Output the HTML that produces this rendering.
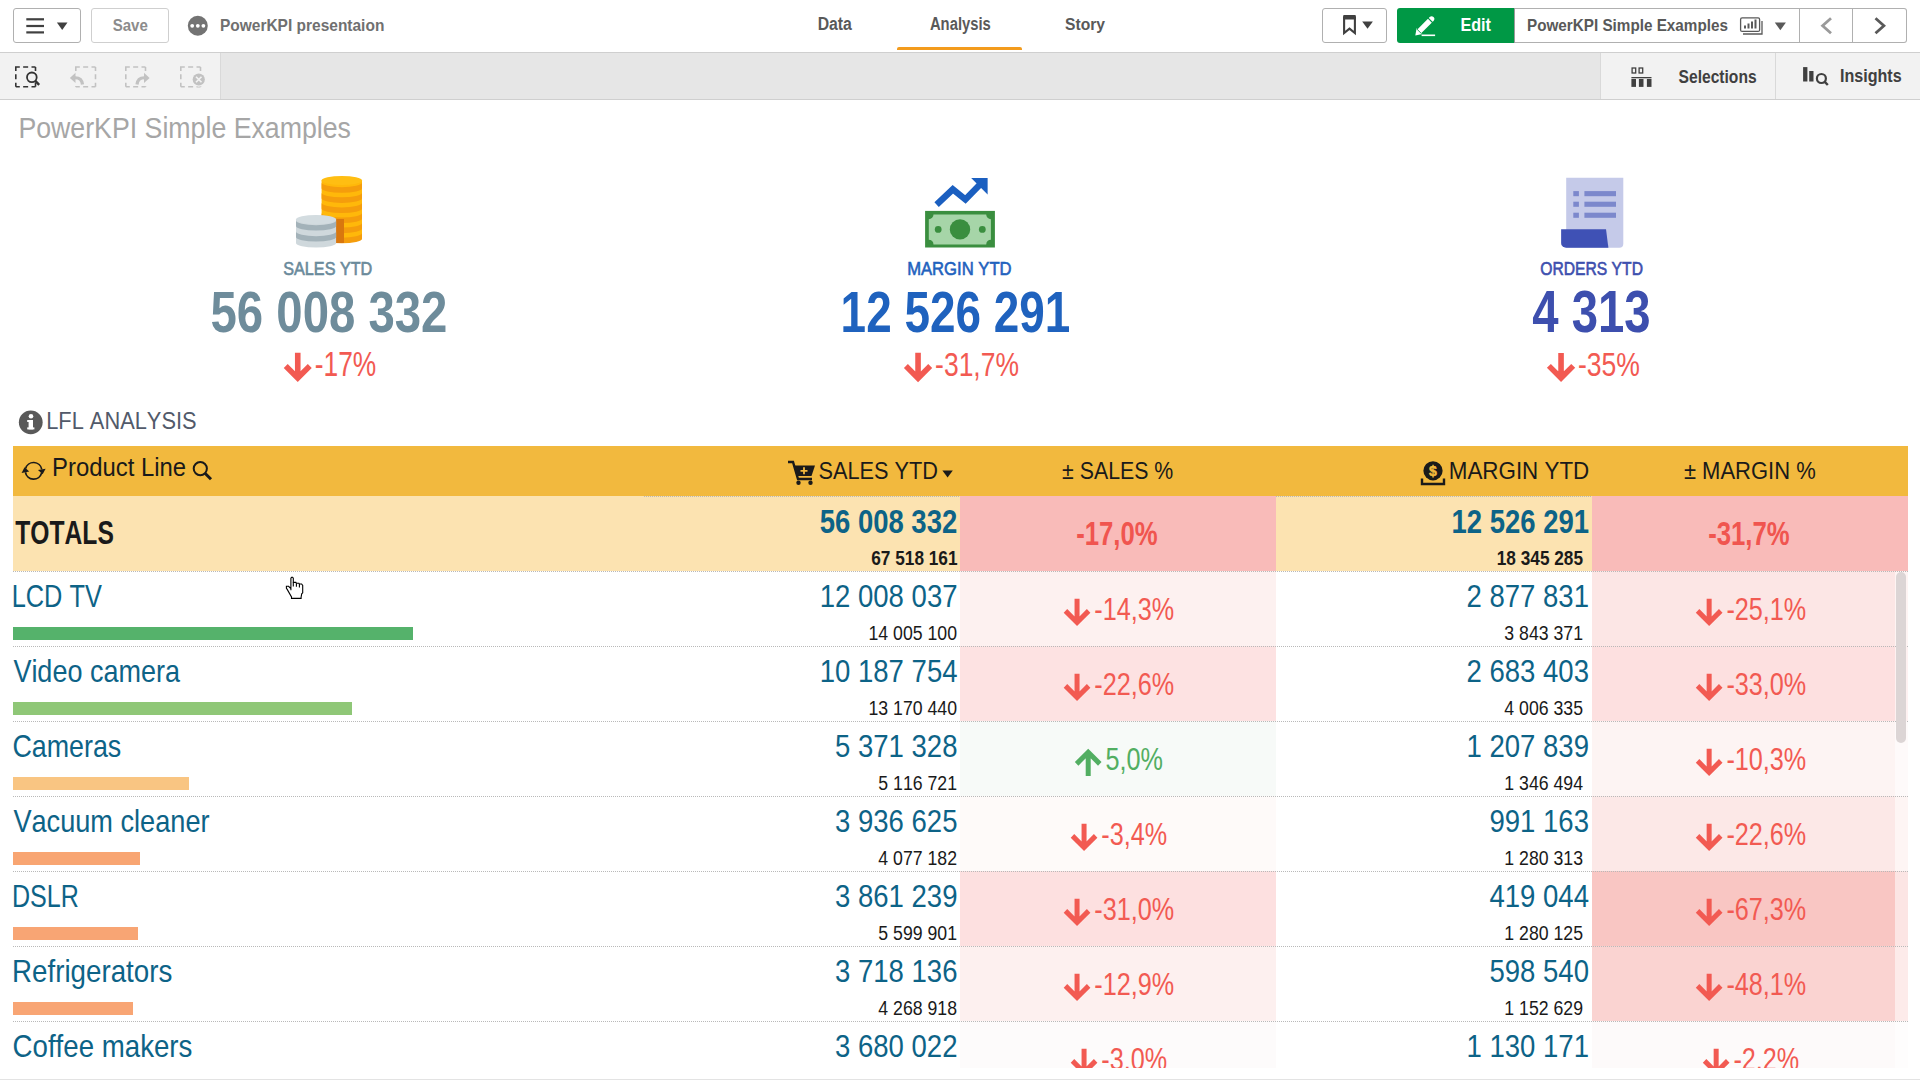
<!DOCTYPE html>
<html><head><meta charset="utf-8"><style>
html,body{margin:0;padding:0;background:#fff;width:1920px;height:1080px;overflow:hidden;}
body{position:relative;font-family:"Liberation Sans",sans-serif;}
svg text{font-family:"Liberation Sans",sans-serif;font-kerning:none;}
</style></head><body>
<div style="position:absolute;left:0px;top:0px;width:1920px;height:52px;background:#ffffff;"></div><div style="position:absolute;left:0px;top:52px;width:1920px;height:1px;background:#cfcfcf;"></div><div style="position:absolute;left:0px;top:53px;width:1920px;height:46px;background:#e6e6e6;"></div><div style="position:absolute;left:0px;top:53px;width:220px;height:46px;background:#f2f2f2;"></div><div style="position:absolute;left:220px;top:53px;width:1px;height:46px;background:#d9d9d9;"></div><div style="position:absolute;left:1600px;top:53px;width:320px;height:46px;background:#f2f2f2;"></div><div style="position:absolute;left:1600px;top:53px;width:1px;height:46px;background:#d9d9d9;"></div><div style="position:absolute;left:1775px;top:53px;width:1px;height:46px;background:#d9d9d9;"></div><div style="position:absolute;left:0px;top:99px;width:1920px;height:1px;background:#cfcfcf;"></div><div style="position:absolute;left:13px;top:8px;width:66px;height:33px;border:1px solid #b0b0b0;border-radius:3px;"></div><div style="position:absolute;left:91px;top:8px;width:76px;height:33px;border:1px solid #cfcfcf;border-radius:3px;"></div><div style="position:absolute;left:1322px;top:8px;width:63px;height:33px;border:1px solid #b0b0b0;border-radius:3px;"></div><div style="position:absolute;left:1397px;top:8px;width:116.5px;height:35px;background:#009845;border-radius:3px 0 0 3px;"></div><div style="position:absolute;left:1514px;top:8px;width:391.5px;height:33px;border:1px solid #b0b0b0;border-left:none;border-radius:0 3px 3px 0;"></div><div style="position:absolute;left:1799px;top:8px;width:1px;height:35px;background:#b0b0b0;"></div><div style="position:absolute;left:1513.5px;top:8px;width:1.0px;height:35px;background:#9a9a9a;"></div><div style="position:absolute;left:1852px;top:8px;width:1px;height:35px;background:#b0b0b0;"></div><div style="position:absolute;left:897px;top:47px;width:125px;height:3px;background:#f39b1d;border-radius:2px 2px 0 0;"></div><div style="position:absolute;left:13px;top:446px;width:1895px;height:50px;background:#f2b93e;"></div><div style="position:absolute;left:13px;top:496px;width:947px;height:75px;background:#fce3b1;"></div><div style="position:absolute;left:960px;top:496px;width:316px;height:75px;background:#f9bbb9;"></div><div style="position:absolute;left:1276px;top:496px;width:316px;height:75px;background:#fce3b1;"></div><div style="position:absolute;left:1592px;top:496px;width:316px;height:75px;background:#f9bbb9;"></div><div style="position:absolute;left:960px;top:571px;width:316px;height:75px;background:#fdf1f0;"></div><div style="position:absolute;left:1592px;top:571px;width:303px;height:75px;background:#fce6e5;"></div><div style="position:absolute;left:1895px;top:571px;width:13px;height:75px;background:#fce6e5;opacity:0.45;"></div><div style="position:absolute;left:13px;top:627.4px;width:400.3px;height:12.200000000000045px;background:#55b26b;"></div><div style="position:absolute;left:960px;top:646px;width:316px;height:75px;background:#fde2e2;"></div><div style="position:absolute;left:1592px;top:646px;width:303px;height:75px;background:#fde0e0;"></div><div style="position:absolute;left:1895px;top:646px;width:13px;height:75px;background:#fde0e0;opacity:0.45;"></div><div style="position:absolute;left:13px;top:702.4px;width:338.9px;height:12.200000000000045px;background:#8fc777;"></div><div style="position:absolute;left:960px;top:721px;width:316px;height:75px;background:#f7faf8;"></div><div style="position:absolute;left:1592px;top:721px;width:303px;height:75px;background:#fdf4f3;"></div><div style="position:absolute;left:1895px;top:721px;width:13px;height:75px;background:#fdf4f3;opacity:0.45;"></div><div style="position:absolute;left:13px;top:777.4px;width:175.9px;height:12.200000000000045px;background:#f9c582;"></div><div style="position:absolute;left:960px;top:796px;width:316px;height:75px;background:#fefaf9;"></div><div style="position:absolute;left:1592px;top:796px;width:303px;height:75px;background:#fce8e7;"></div><div style="position:absolute;left:1895px;top:796px;width:13px;height:75px;background:#fce8e7;opacity:0.45;"></div><div style="position:absolute;left:13px;top:852.4px;width:127px;height:12.200000000000045px;background:#f8a572;"></div><div style="position:absolute;left:960px;top:871px;width:316px;height:75px;background:#fde0e0;"></div><div style="position:absolute;left:1592px;top:871px;width:303px;height:75px;background:#f9c6c3;"></div><div style="position:absolute;left:1895px;top:871px;width:13px;height:75px;background:#f9c6c3;opacity:0.45;"></div><div style="position:absolute;left:13px;top:927.4px;width:124.80000000000001px;height:12.200000000000045px;background:#f8a574;"></div><div style="position:absolute;left:960px;top:946px;width:316px;height:75px;background:#fdf0ef;"></div><div style="position:absolute;left:1592px;top:946px;width:303px;height:75px;background:#fad3d1;"></div><div style="position:absolute;left:1895px;top:946px;width:13px;height:75px;background:#fad3d1;opacity:0.45;"></div><div style="position:absolute;left:13px;top:1002.4px;width:119.6px;height:12.200000000000045px;background:#f8a574;"></div><div style="position:absolute;left:960px;top:1021px;width:316px;height:75px;background:#fdfbfb;"></div><div style="position:absolute;left:1592px;top:1021px;width:303px;height:75px;background:#fdfafa;"></div><div style="position:absolute;left:1895px;top:1021px;width:13px;height:75px;background:#fdfafa;opacity:0.45;"></div><div style="position:absolute;left:13px;top:571px;width:1895px;height:1px;background:repeating-linear-gradient(to right,#b9b9b9 0 1px,transparent 1px 2px);"></div><div style="position:absolute;left:13px;top:646px;width:1895px;height:1px;background:repeating-linear-gradient(to right,#b9b9b9 0 1px,transparent 1px 2px);"></div><div style="position:absolute;left:13px;top:721px;width:1895px;height:1px;background:repeating-linear-gradient(to right,#b9b9b9 0 1px,transparent 1px 2px);"></div><div style="position:absolute;left:13px;top:796px;width:1895px;height:1px;background:repeating-linear-gradient(to right,#b9b9b9 0 1px,transparent 1px 2px);"></div><div style="position:absolute;left:13px;top:871px;width:1895px;height:1px;background:repeating-linear-gradient(to right,#b9b9b9 0 1px,transparent 1px 2px);"></div><div style="position:absolute;left:13px;top:946px;width:1895px;height:1px;background:repeating-linear-gradient(to right,#b9b9b9 0 1px,transparent 1px 2px);"></div><div style="position:absolute;left:13px;top:1021px;width:1895px;height:1px;background:repeating-linear-gradient(to right,#b9b9b9 0 1px,transparent 1px 2px);"></div><div style="position:absolute;left:644px;top:496px;width:316px;height:1px;background:repeating-linear-gradient(to right,#b9b9b9 0 1px,transparent 1px 2px);"></div><div style="position:absolute;left:1276px;top:496px;width:316px;height:1px;background:repeating-linear-gradient(to right,#b9b9b9 0 1px,transparent 1px 2px);"></div><div style="position:absolute;left:1896px;top:572px;width:10px;height:171px;background:#dcd5d5;border-radius:5px;"></div>
<svg width="1920" height="1080" style="position:absolute;left:0;top:0"><g transform="translate(283.75,352.80)"><path d="M14.00 0 V25.24 M1.98 13.22 L14.00 25.24 L26.02 13.22" stroke="#f25a52" stroke-width="5.6" fill="none" stroke-linejoin="miter" stroke-miterlimit="4"/></g><g transform="translate(903.90,352.80)"><path d="M14.15 0 V25.44 M1.98 13.27 L14.15 25.44 L26.32 13.27" stroke="#f25a52" stroke-width="5.6" fill="none" stroke-linejoin="miter" stroke-miterlimit="4"/></g><g transform="translate(1546.90,352.90)"><path d="M14.15 0 V25.14 M1.98 12.97 L14.15 25.14 L26.32 12.97" stroke="#f25a52" stroke-width="5.6" fill="none" stroke-linejoin="miter" stroke-miterlimit="4"/></g><g transform="translate(1063.70,598.75)"><path d="M13.35 0 V23.71 M1.77 12.13 L13.35 23.71 L24.93 12.13" stroke="#f25a52" stroke-width="5.0" fill="none" stroke-linejoin="miter" stroke-miterlimit="4"/></g><g transform="translate(1695.80,598.75)"><path d="M13.35 0 V23.71 M1.77 12.13 L13.35 23.71 L24.93 12.13" stroke="#f25a52" stroke-width="5.0" fill="none" stroke-linejoin="miter" stroke-miterlimit="4"/></g><g transform="translate(1063.70,673.75)"><path d="M13.35 0 V23.71 M1.77 12.13 L13.35 23.71 L24.93 12.13" stroke="#f25a52" stroke-width="5.0" fill="none" stroke-linejoin="miter" stroke-miterlimit="4"/></g><g transform="translate(1695.80,673.75)"><path d="M13.35 0 V23.71 M1.77 12.13 L13.35 23.71 L24.93 12.13" stroke="#f25a52" stroke-width="5.0" fill="none" stroke-linejoin="miter" stroke-miterlimit="4"/></g><g transform="translate(1074.86,748.75) translate(0,27.25) scale(1,-1)"><path d="M13.35 0 V23.71 M1.77 12.13 L13.35 23.71 L24.93 12.13" stroke="#52ae62" stroke-width="5.0" fill="none" stroke-linejoin="miter" stroke-miterlimit="4"/></g><g transform="translate(1695.80,748.75)"><path d="M13.35 0 V23.71 M1.77 12.13 L13.35 23.71 L24.93 12.13" stroke="#f25a52" stroke-width="5.0" fill="none" stroke-linejoin="miter" stroke-miterlimit="4"/></g><g transform="translate(1070.71,823.75)"><path d="M13.35 0 V23.71 M1.77 12.13 L13.35 23.71 L24.93 12.13" stroke="#f25a52" stroke-width="5.0" fill="none" stroke-linejoin="miter" stroke-miterlimit="4"/></g><g transform="translate(1695.80,823.75)"><path d="M13.35 0 V23.71 M1.77 12.13 L13.35 23.71 L24.93 12.13" stroke="#f25a52" stroke-width="5.0" fill="none" stroke-linejoin="miter" stroke-miterlimit="4"/></g><g transform="translate(1063.70,898.75)"><path d="M13.35 0 V23.71 M1.77 12.13 L13.35 23.71 L24.93 12.13" stroke="#f25a52" stroke-width="5.0" fill="none" stroke-linejoin="miter" stroke-miterlimit="4"/></g><g transform="translate(1695.80,898.75)"><path d="M13.35 0 V23.71 M1.77 12.13 L13.35 23.71 L24.93 12.13" stroke="#f25a52" stroke-width="5.0" fill="none" stroke-linejoin="miter" stroke-miterlimit="4"/></g><g transform="translate(1063.70,973.75)"><path d="M13.35 0 V23.71 M1.77 12.13 L13.35 23.71 L24.93 12.13" stroke="#f25a52" stroke-width="5.0" fill="none" stroke-linejoin="miter" stroke-miterlimit="4"/></g><g transform="translate(1695.80,973.75)"><path d="M13.35 0 V23.71 M1.77 12.13 L13.35 23.71 L24.93 12.13" stroke="#f25a52" stroke-width="5.0" fill="none" stroke-linejoin="miter" stroke-miterlimit="4"/></g><g transform="translate(1070.71,1048.75)"><path d="M13.35 0 V23.71 M1.77 12.13 L13.35 23.71 L24.93 12.13" stroke="#f25a52" stroke-width="5.0" fill="none" stroke-linejoin="miter" stroke-miterlimit="4"/></g><g transform="translate(1702.81,1048.75)"><path d="M13.35 0 V23.71 M1.77 12.13 L13.35 23.71 L24.93 12.13" stroke="#f25a52" stroke-width="5.0" fill="none" stroke-linejoin="miter" stroke-miterlimit="4"/></g><path d="M321.6 180.5 V238 A20.19999999999999 4.6 0 0 0 362.0 238 V180.5 Z" fill="#ffb80a"/><path d="M321.6 188.2 A20.19999999999999 4.6 0 0 0 362.0 188.2 V182.6 A20.19999999999999 4.6 0 0 1 321.6 182.6 Z" fill="#f59d0c"/><path d="M321.6 198.29999999999998 A20.19999999999999 4.6 0 0 0 362.0 198.29999999999998 V192.7 A20.19999999999999 4.6 0 0 1 321.6 192.7 Z" fill="#f59d0c"/><path d="M321.6 208.39999999999998 A20.19999999999999 4.6 0 0 0 362.0 208.39999999999998 V202.79999999999998 A20.19999999999999 4.6 0 0 1 321.6 202.79999999999998 Z" fill="#f59d0c"/><path d="M321.6 218.5 A20.19999999999999 4.6 0 0 0 362.0 218.5 V212.9 A20.19999999999999 4.6 0 0 1 321.6 212.9 Z" fill="#f59d0c"/><path d="M321.6 228.6 A20.19999999999999 4.6 0 0 0 362.0 228.6 V223.0 A20.19999999999999 4.6 0 0 1 321.6 223.0 Z" fill="#f59d0c"/><path d="M321.6 238.7 A20.19999999999999 4.6 0 0 0 362.0 238.7 V233.1 A20.19999999999999 4.6 0 0 1 321.6 233.1 Z" fill="#f59d0c"/><ellipse cx="341.8" cy="180.5" rx="20.19999999999999" ry="4.6" fill="#ffbe12"/><rect x="336" y="219" width="8" height="24" fill="#d9770e"/><path d="M296.0 219.5 V243 A20.05000000000001 4.6 0 0 0 336.1 243 V219.5 Z" fill="#cfd8dc"/><path d="M296.0 226 A20.05000000000001 4.6 0 0 0 336.1 226 V220.6 A20.05000000000001 4.6 0 0 1 296.0 220.6 Z" fill="#a3b2b9"/><path d="M296.0 237 A20.05000000000001 4.6 0 0 0 336.1 237 V231.6 A20.05000000000001 4.6 0 0 1 296.0 231.6 Z" fill="#a3b2b9"/><ellipse cx="316.05" cy="219.5" rx="20.05000000000001" ry="4.6" fill="#d3dce0"/><rect x="925.1" y="210.9" width="69.8" height="36.6" fill="#3a8e3f"/><path d="M933.5 214.5 H986.2 A4.7 4.7 0 0 0 990.9 219.2 V239.7 A4.7 4.7 0 0 0 986.2 244.4 H933.5 A4.7 4.7 0 0 0 928.8 239.7 V219.2 A4.7 4.7 0 0 0 933.5 214.5 Z" fill="#a6d5a8"/><circle cx="960" cy="229.4" r="10.2" fill="#3a8e3f"/><circle cx="938.2" cy="229.4" r="3.4" fill="#3a8e3f"/><circle cx="982.3" cy="229.4" r="3.4" fill="#3a8e3f"/><polyline points="936.6,204.6 952.8,189.3 965.4,199.5 980,184.5" fill="none" stroke="#1b5fc0" stroke-width="6.4" stroke-linejoin="miter"/><polygon points="971.2,177.9 987.6,177.9 987.6,194.4" fill="#1b5fc0"/><path d="M1566.2 177.8 H1623.3 V243.8 A4 4 0 0 1 1619.3 247.8 H1566.2 Z" fill="#c5cae9"/><rect x="1573.3" y="191.1" width="5.6" height="5.1" fill="#7c88cc"/><rect x="1584.4" y="191.1" width="31.6" height="5.1" fill="#7c88cc"/><rect x="1573.3" y="201.7" width="5.6" height="5.1" fill="#7c88cc"/><rect x="1584.4" y="201.7" width="31.6" height="5.1" fill="#7c88cc"/><rect x="1573.3" y="212.7" width="5.6" height="5.1" fill="#7c88cc"/><rect x="1584.4" y="212.7" width="31.6" height="5.1" fill="#7c88cc"/><path d="M1561.1 229.3 H1606 L1608.4 247.8 H1566 A4.9 4.9 0 0 1 1561.1 242.9 Z" fill="#3f51b5"/><rect x="26.3" y="18.2" width="17.7" height="2.2" fill="#404040"/><rect x="26.3" y="24.9" width="17.7" height="2.2" fill="#404040"/><rect x="26.3" y="31.3" width="17.7" height="2.2" fill="#404040"/><polygon points="56.9,22.5 67.5,22.5 62.2,30" fill="#404040"/><circle cx="197.8" cy="25.8" r="10" fill="#737373"/><circle cx="192.2" cy="25.8" r="1.9" fill="#fff"/><circle cx="197.8" cy="25.8" r="1.9" fill="#fff"/><circle cx="203.4" cy="25.8" r="1.9" fill="#fff"/><path d="M1344.1 17 V33 L1349.5 28.6 L1354.9 33 V17" fill="none" stroke="#404040" stroke-width="2.1" stroke-linejoin="miter"/><rect x="1343.1" y="14.9" width="12.8" height="4.6" rx="1" fill="#404040"/><polygon points="1362.2,21.6 1372.9,21.6 1367.55,28.8" fill="#404040"/><line x1="1420" y1="30.6" x2="1431.6" y2="19" stroke="#fff" stroke-width="5.4" stroke-linecap="round"/><polygon points="1415.3,35.4 1416.6,28.2 1422.4,34" fill="#fff"/><line x1="1427.6" y1="17.6" x2="1433" y2="23" stroke="#009845" stroke-width="1.1"/><line x1="1416.8" y1="29" x2="1421.6" y2="33.8" stroke="#009845" stroke-width="0.9"/><rect x="1421.6" y="34.5" width="13.5" height="1.6" fill="#fff"/><g fill="none" stroke="#595959" stroke-width="1.3"><rect x="1740.6" y="17.9" width="19" height="13.5" rx="1.5"/><path d="M1743 34 H1762 V21"/></g><rect x="1744.0" y="25.5" width="2" height="3" fill="#595959"/><rect x="1747.5" y="23.5" width="2" height="5" fill="#595959"/><rect x="1751.0" y="21.5" width="2" height="7" fill="#595959"/><rect x="1754.5" y="19.5" width="2" height="9" fill="#595959"/><polygon points="1774.8,22.4 1785.9,22.4 1780.35,30.3" fill="#595959"/><polyline points="1831,18.2 1822.6,25.7 1831,33.2" fill="none" stroke="#9a9a9a" stroke-width="2.8"/><polyline points="1875.5,18.2 1883.9,25.7 1875.5,33.2" fill="none" stroke="#595959" stroke-width="2.8"/><rect x="15.8" y="67.0" width="19.7" height="19.7" fill="none" stroke="#333333" stroke-width="1.6" stroke-dasharray="4 3.35 5 3.35 4 0"/><circle cx="31.85" cy="77.35" r="4.85" fill="#f2f2f2" stroke="#333333" stroke-width="1.8"/><line x1="35.3" y1="80.8" x2="39.2" y2="84.9" stroke="#333333" stroke-width="2.4"/><rect x="75.8" y="67.0" width="19.7" height="19.7" fill="none" stroke="#c2c2c2" stroke-width="1.6" stroke-dasharray="4 3.35 5 3.35 4 0"/><rect x="68" y="72" width="16" height="14" fill="#f2f2f2"/><path d="M82.5 84.5 C82 79 78 77.5 74 77.8" fill="none" stroke="#c2c2c2" stroke-width="3.2"/><polygon points="69.9,78 75.5,72.8 75.5,83" fill="#c2c2c2"/><rect x="125.8" y="67.0" width="19.7" height="19.7" fill="none" stroke="#c2c2c2" stroke-width="1.6" stroke-dasharray="4 3.35 5 3.35 4 0"/><rect x="136" y="72" width="15" height="14" fill="#f2f2f2"/><path d="M137 84.5 C137.5 79 141.5 77.5 145.5 77.8" fill="none" stroke="#c2c2c2" stroke-width="3.2"/><polygon points="149.6,78 144,72.8 144,83" fill="#c2c2c2"/><rect x="180.8" y="67.0" width="19.7" height="19.7" fill="none" stroke="#c2c2c2" stroke-width="1.6" stroke-dasharray="4 3.35 5 3.35 4 0"/><circle cx="198.75" cy="79.5" r="7.2" fill="#f2f2f2"/><circle cx="198.75" cy="79.5" r="6.1" fill="#c2c2c2"/><path d="M196 76.75 L201.5 82.25 M201.5 76.75 L196 82.25" stroke="#f2f2f2" stroke-width="1.7"/><rect x="1632.1" y="68" width="3.6" height="5" fill="none" stroke="#404040" stroke-width="1.3"/><rect x="1639.1" y="68" width="3.6" height="5" fill="none" stroke="#404040" stroke-width="1.3"/><rect x="1631.4" y="77" width="20.1" height="1.3" fill="#404040"/><rect x="1631.4" y="79" width="4.6" height="7.9" fill="#404040"/><rect x="1638.9" y="79" width="4.6" height="7.9" fill="#404040"/><rect x="1646.9" y="79" width="4.6" height="7.9" fill="#404040"/><rect x="1803.1" y="67.1" width="4.3" height="14.4" fill="#404040"/><rect x="1809.2" y="71" width="4.3" height="10.5" fill="#404040"/><circle cx="1821.4" cy="78.5" r="4.5" fill="none" stroke="#404040" stroke-width="2.2"/><line x1="1824.5" y1="81.6" x2="1827.8" y2="85" stroke="#404040" stroke-width="2.4"/><circle cx="30.75" cy="422.3" r="11.9" fill="#595959"/><rect x="28.6" y="420" width="4.4" height="9.4" fill="#fff"/><rect x="27.2" y="420" width="3" height="2" fill="#fff"/><rect x="27.2" y="427.4" width="7.2" height="2" fill="#fff"/><circle cx="31" cy="416.3" r="2.3" fill="#fff"/><g fill="none" stroke="#1a1a1a" stroke-width="1.7"><path d="M25.58 468.65 A8.3 8.3 0 0 1 41.77 469.36"/><path d="M41.62 472.95 A8.3 8.3 0 0 1 25.43 472.24"/></g><polygon points="42.64,474.28 45.61,468.68 37.93,470.04" fill="#1a1a1a"/><polygon points="24.56,467.32 21.59,472.92 29.27,471.56" fill="#1a1a1a"/><circle cx="200.3" cy="468.6" r="6.6" fill="none" stroke="#1a1a1a" stroke-width="2"/><line x1="205" y1="473.3" x2="211" y2="479.3" stroke="#1a1a1a" stroke-width="3"/><path d="M788 462 H793 L798 479 H812" fill="none" stroke="#1a1a1a" stroke-width="2.4"/><path d="M793.5 465.5 H815 L811.5 476 H797 Z" fill="#1a1a1a"/><circle cx="798.5" cy="482.8" r="2.2" fill="#1a1a1a"/><circle cx="810.5" cy="482.8" r="2.2" fill="#1a1a1a"/><path d="M804 467.3 V474.3 M800.5 470.8 H807.5" stroke="#f2b93e" stroke-width="1.8"/><polygon points="942.4,470.5 952.8,470.5 947.6,477.6" fill="#1a1a1a"/><circle cx="1433" cy="470.8" r="9.6" fill="#1a1a1a"/><path d="M1422 478.6 V484 H1444 V478.6" fill="none" stroke="#1a1a1a" stroke-width="2.4"/><text x="1433" y="476.3" font-size="14" font-weight="bold" fill="#f2b93e" stroke="#f2b93e" stroke-width="0.5" text-anchor="middle">$</text><text x="112.67" y="30.80" font-size="17.15" font-weight="bold" fill="#8c8c8c" textLength="35.15" lengthAdjust="spacingAndGlyphs">Save</text><text x="219.96" y="30.80" font-size="17.15" font-weight="bold" fill="#707070" textLength="164.40" lengthAdjust="spacingAndGlyphs">PowerKPI presentaion</text><text x="817.64" y="30.10" font-size="17.44" font-weight="bold" fill="#595959" textLength="34.26" lengthAdjust="spacingAndGlyphs">Data</text><text x="929.93" y="30.10" font-size="17.44" font-weight="bold" fill="#595959" textLength="60.88" lengthAdjust="spacingAndGlyphs">Analysis</text><text x="1065.05" y="29.90" font-size="17.30" font-weight="bold" fill="#595959" textLength="40.04" lengthAdjust="spacingAndGlyphs">Story</text><text x="1460.42" y="30.80" font-size="17.51" font-weight="bold" fill="#ffffff" textLength="30.58" lengthAdjust="spacingAndGlyphs">Edit</text><text x="1526.98" y="31.00" font-size="17.30" font-weight="bold" fill="#595959" textLength="200.95" lengthAdjust="spacingAndGlyphs">PowerKPI Simple Examples</text><text x="1678.55" y="82.80" font-size="17.44" font-weight="bold" fill="#404040" textLength="78.09" lengthAdjust="spacingAndGlyphs">Selections</text><text x="1839.92" y="81.70" font-size="17.44" font-weight="bold" fill="#404040" textLength="61.74" lengthAdjust="spacingAndGlyphs">Insights</text><text x="18.41" y="138.00" font-size="29.36" font-weight="normal" fill="#a6a6a6" textLength="332.56" lengthAdjust="spacingAndGlyphs">PowerKPI Simple Examples</text><text x="283.27" y="274.70" font-size="17.44" font-weight="normal" fill="#6a8a9b" textLength="89.01" lengthAdjust="spacingAndGlyphs" stroke="#6a8a9b" stroke-width="0.6">SALES YTD</text><text x="210.54" y="332.00" font-size="57.43" font-weight="bold" fill="#6e8c9b" textLength="236.85" lengthAdjust="spacingAndGlyphs">56 008 332</text><text x="314.73" y="375.90" font-size="34.29" font-weight="normal" fill="#f25a52" textLength="61.51" lengthAdjust="spacingAndGlyphs">-17%</text><text x="907.14" y="275.00" font-size="18.31" font-weight="normal" fill="#1f62be" textLength="104.46" lengthAdjust="spacingAndGlyphs" stroke="#1f62be" stroke-width="0.6">MARGIN YTD</text><text x="840.61" y="331.90" font-size="58.00" font-weight="bold" fill="#1f62be" textLength="229.67" lengthAdjust="spacingAndGlyphs">12 526 291</text><text x="935.12" y="375.90" font-size="34.14" font-weight="normal" fill="#f25a52" textLength="83.82" lengthAdjust="spacingAndGlyphs">-31,7%</text><text x="1540.26" y="274.90" font-size="17.73" font-weight="normal" fill="#3d4fae" textLength="102.69" lengthAdjust="spacingAndGlyphs" stroke="#3d4fae" stroke-width="0.6">ORDERS YTD</text><text x="1532.18" y="332.00" font-size="58.57" font-weight="bold" fill="#3d4fae" textLength="118.43" lengthAdjust="spacingAndGlyphs">4 313</text><text x="1577.92" y="375.90" font-size="34.14" font-weight="normal" fill="#f25a52" textLength="62.03" lengthAdjust="spacingAndGlyphs">-35%</text><text x="46.21" y="429.00" font-size="24.71" font-weight="normal" fill="#525a6a" textLength="150.39" lengthAdjust="spacingAndGlyphs">LFL ANALYSIS</text><text x="52.04" y="475.90" font-size="24.93" font-weight="normal" fill="#1a1a1a" textLength="134.02" lengthAdjust="spacingAndGlyphs">Product Line</text><text x="818.51" y="478.90" font-size="24.56" font-weight="normal" fill="#1a1a1a" textLength="119.53" lengthAdjust="spacingAndGlyphs">SALES YTD</text><text x="1062.12" y="478.80" font-size="24.42" font-weight="normal" fill="#1a1a1a" textLength="111.14" lengthAdjust="spacingAndGlyphs">± SALES %</text><text x="1448.76" y="478.70" font-size="24.13" font-weight="normal" fill="#1a1a1a" textLength="140.51" lengthAdjust="spacingAndGlyphs">MARGIN YTD</text><text x="1683.90" y="478.75" font-size="23.91" font-weight="normal" fill="#1a1a1a" textLength="131.88" lengthAdjust="spacingAndGlyphs">± MARGIN %</text><text x="15.32" y="544.40" font-size="33.28" font-weight="bold" fill="#1a1a1a" textLength="98.54" lengthAdjust="spacingAndGlyphs">TOTALS</text><text x="819.76" y="532.70" font-size="33.29" font-weight="bold" fill="#0d6387" textLength="137.44" lengthAdjust="spacingAndGlyphs">56 008 332</text><text x="871.29" y="565.00" font-size="20.29" font-weight="bold" fill="#1a1a1a" textLength="86.21" lengthAdjust="spacingAndGlyphs">67 518 161</text><text x="1451.56" y="532.70" font-size="33.29" font-weight="bold" fill="#0d6387" textLength="137.44" lengthAdjust="spacingAndGlyphs">12 526 291</text><text x="1496.79" y="565.00" font-size="20.29" font-weight="bold" fill="#1a1a1a" textLength="86.21" lengthAdjust="spacingAndGlyphs">18 345 285</text><text x="1076.15" y="544.70" font-size="34.00" font-weight="bold" fill="#f0554f" textLength="81.38" lengthAdjust="spacingAndGlyphs">-17,0%</text><text x="1708.15" y="544.70" font-size="34.00" font-weight="bold" fill="#f0554f" textLength="81.38" lengthAdjust="spacingAndGlyphs">-31,7%</text><text x="11.67" y="607.00" font-size="32.27" font-weight="normal" fill="#0d6387" textLength="90.19" lengthAdjust="spacingAndGlyphs">LCD TV</text><text x="819.72" y="607.00" font-size="31.29" font-weight="normal" fill="#0d6387" textLength="137.78" lengthAdjust="spacingAndGlyphs">12 008 037</text><text x="868.51" y="639.80" font-size="19.36" font-weight="normal" fill="#1a1a1a" textLength="88.49" lengthAdjust="spacingAndGlyphs">14 005 100</text><text x="1466.53" y="607.00" font-size="31.29" font-weight="normal" fill="#0d6387" textLength="122.47" lengthAdjust="spacingAndGlyphs">2 877 831</text><text x="1504.35" y="639.80" font-size="19.36" font-weight="normal" fill="#1a1a1a" textLength="78.65" lengthAdjust="spacingAndGlyphs">3 843 371</text><text x="13.38" y="682.00" font-size="32.27" font-weight="normal" fill="#0d6387" textLength="166.52" lengthAdjust="spacingAndGlyphs">Video camera</text><text x="819.72" y="682.00" font-size="31.29" font-weight="normal" fill="#0d6387" textLength="137.78" lengthAdjust="spacingAndGlyphs">10 187 754</text><text x="868.51" y="714.80" font-size="19.36" font-weight="normal" fill="#1a1a1a" textLength="88.49" lengthAdjust="spacingAndGlyphs">13 170 440</text><text x="1466.53" y="682.00" font-size="31.29" font-weight="normal" fill="#0d6387" textLength="122.47" lengthAdjust="spacingAndGlyphs">2 683 403</text><text x="1504.35" y="714.80" font-size="19.36" font-weight="normal" fill="#1a1a1a" textLength="78.65" lengthAdjust="spacingAndGlyphs">4 006 335</text><text x="12.39" y="757.00" font-size="32.27" font-weight="normal" fill="#0d6387" textLength="108.88" lengthAdjust="spacingAndGlyphs">Cameras</text><text x="835.03" y="757.00" font-size="31.29" font-weight="normal" fill="#0d6387" textLength="122.47" lengthAdjust="spacingAndGlyphs">5 371 328</text><text x="878.35" y="789.80" font-size="19.36" font-weight="normal" fill="#1a1a1a" textLength="78.65" lengthAdjust="spacingAndGlyphs">5 116 721</text><text x="1466.53" y="757.00" font-size="31.29" font-weight="normal" fill="#0d6387" textLength="122.47" lengthAdjust="spacingAndGlyphs">1 207 839</text><text x="1504.35" y="789.80" font-size="19.36" font-weight="normal" fill="#1a1a1a" textLength="78.65" lengthAdjust="spacingAndGlyphs">1 346 494</text><text x="13.38" y="832.00" font-size="32.27" font-weight="normal" fill="#0d6387" textLength="196.17" lengthAdjust="spacingAndGlyphs">Vacuum cleaner</text><text x="835.03" y="832.00" font-size="31.29" font-weight="normal" fill="#0d6387" textLength="122.47" lengthAdjust="spacingAndGlyphs">3 936 625</text><text x="878.35" y="864.80" font-size="19.36" font-weight="normal" fill="#1a1a1a" textLength="78.65" lengthAdjust="spacingAndGlyphs">4 077 182</text><text x="1489.49" y="832.00" font-size="31.29" font-weight="normal" fill="#0d6387" textLength="99.51" lengthAdjust="spacingAndGlyphs">991 163</text><text x="1504.35" y="864.80" font-size="19.36" font-weight="normal" fill="#1a1a1a" textLength="78.65" lengthAdjust="spacingAndGlyphs">1 280 313</text><text x="11.94" y="907.00" font-size="32.27" font-weight="normal" fill="#0d6387" textLength="66.92" lengthAdjust="spacingAndGlyphs">DSLR</text><text x="835.03" y="907.00" font-size="31.29" font-weight="normal" fill="#0d6387" textLength="122.47" lengthAdjust="spacingAndGlyphs">3 861 239</text><text x="878.35" y="939.80" font-size="19.36" font-weight="normal" fill="#1a1a1a" textLength="78.65" lengthAdjust="spacingAndGlyphs">5 599 901</text><text x="1489.49" y="907.00" font-size="31.29" font-weight="normal" fill="#0d6387" textLength="99.51" lengthAdjust="spacingAndGlyphs">419 044</text><text x="1504.35" y="939.80" font-size="19.36" font-weight="normal" fill="#1a1a1a" textLength="78.65" lengthAdjust="spacingAndGlyphs">1 280 125</text><text x="12.03" y="982.00" font-size="32.27" font-weight="normal" fill="#0d6387" textLength="160.28" lengthAdjust="spacingAndGlyphs">Refrigerators</text><text x="835.03" y="982.00" font-size="31.29" font-weight="normal" fill="#0d6387" textLength="122.47" lengthAdjust="spacingAndGlyphs">3 718 136</text><text x="878.35" y="1014.80" font-size="19.36" font-weight="normal" fill="#1a1a1a" textLength="78.65" lengthAdjust="spacingAndGlyphs">4 268 918</text><text x="1489.49" y="982.00" font-size="31.29" font-weight="normal" fill="#0d6387" textLength="99.51" lengthAdjust="spacingAndGlyphs">598 540</text><text x="1504.35" y="1014.80" font-size="19.36" font-weight="normal" fill="#1a1a1a" textLength="78.65" lengthAdjust="spacingAndGlyphs">1 152 629</text><text x="12.60" y="1057.00" font-size="32.27" font-weight="normal" fill="#0d6387" textLength="179.80" lengthAdjust="spacingAndGlyphs">Coffee makers</text><text x="835.03" y="1057.00" font-size="31.29" font-weight="normal" fill="#0d6387" textLength="122.47" lengthAdjust="spacingAndGlyphs">3 680 022</text><text x="1466.53" y="1057.00" font-size="31.29" font-weight="normal" fill="#0d6387" textLength="122.47" lengthAdjust="spacingAndGlyphs">1 130 171</text><text x="1094.28" y="620.00" font-size="31.57" font-weight="normal" fill="#f25a52" textLength="79.92" lengthAdjust="spacingAndGlyphs">-14,3%</text><text x="1726.38" y="620.00" font-size="31.57" font-weight="normal" fill="#f25a52" textLength="79.92" lengthAdjust="spacingAndGlyphs">-25,1%</text><text x="1094.28" y="695.00" font-size="31.57" font-weight="normal" fill="#f25a52" textLength="79.92" lengthAdjust="spacingAndGlyphs">-22,6%</text><text x="1726.38" y="695.00" font-size="31.57" font-weight="normal" fill="#f25a52" textLength="79.92" lengthAdjust="spacingAndGlyphs">-33,0%</text><text x="1105.55" y="770.00" font-size="31.57" font-weight="normal" fill="#52ae62" textLength="57.49" lengthAdjust="spacingAndGlyphs">5,0%</text><text x="1726.38" y="770.00" font-size="31.57" font-weight="normal" fill="#f25a52" textLength="79.92" lengthAdjust="spacingAndGlyphs">-10,3%</text><text x="1101.29" y="845.00" font-size="31.57" font-weight="normal" fill="#f25a52" textLength="65.89" lengthAdjust="spacingAndGlyphs">-3,4%</text><text x="1726.38" y="845.00" font-size="31.57" font-weight="normal" fill="#f25a52" textLength="79.92" lengthAdjust="spacingAndGlyphs">-22,6%</text><text x="1094.28" y="920.00" font-size="31.57" font-weight="normal" fill="#f25a52" textLength="79.92" lengthAdjust="spacingAndGlyphs">-31,0%</text><text x="1726.38" y="920.00" font-size="31.57" font-weight="normal" fill="#f25a52" textLength="79.92" lengthAdjust="spacingAndGlyphs">-67,3%</text><text x="1094.28" y="995.00" font-size="31.57" font-weight="normal" fill="#f25a52" textLength="79.92" lengthAdjust="spacingAndGlyphs">-12,9%</text><text x="1726.38" y="995.00" font-size="31.57" font-weight="normal" fill="#f25a52" textLength="79.92" lengthAdjust="spacingAndGlyphs">-48,1%</text><text x="1101.29" y="1070.00" font-size="31.57" font-weight="normal" fill="#f25a52" textLength="65.89" lengthAdjust="spacingAndGlyphs">-3,0%</text><text x="1733.39" y="1070.00" font-size="31.57" font-weight="normal" fill="#f25a52" textLength="65.89" lengthAdjust="spacingAndGlyphs">-2,2%</text><path d="M290.9 590.3 V578.1 L291.6 577.3 H292.6 L293.3 578.1 V582.4 H295.9 L296.4 583.2 H298.9 L299.4 584 H301.6 L302.7 585.4 V592.8 L301.7 593.8 L301.1 597.2 V598.4 H291.5 V597 L287.2 589.4 L286.4 588.4 V586.3 H288.6 L290.9 588.6" fill="#fff" stroke="#000" stroke-width="1.1" stroke-linejoin="miter"/><path d="M293.3 582.4 V586.6 M296.4 583.2 V586.8 M299.4 584 V587.6" stroke="#000" stroke-width="1.1" fill="none"/></svg>
<div style="position:absolute;left:0;top:1068px;width:1920px;height:12px;background:#fff;"></div><div style="position:absolute;left:0;top:1079px;width:1920px;height:1px;background:#e3e3e3;"></div>
</body></html>
